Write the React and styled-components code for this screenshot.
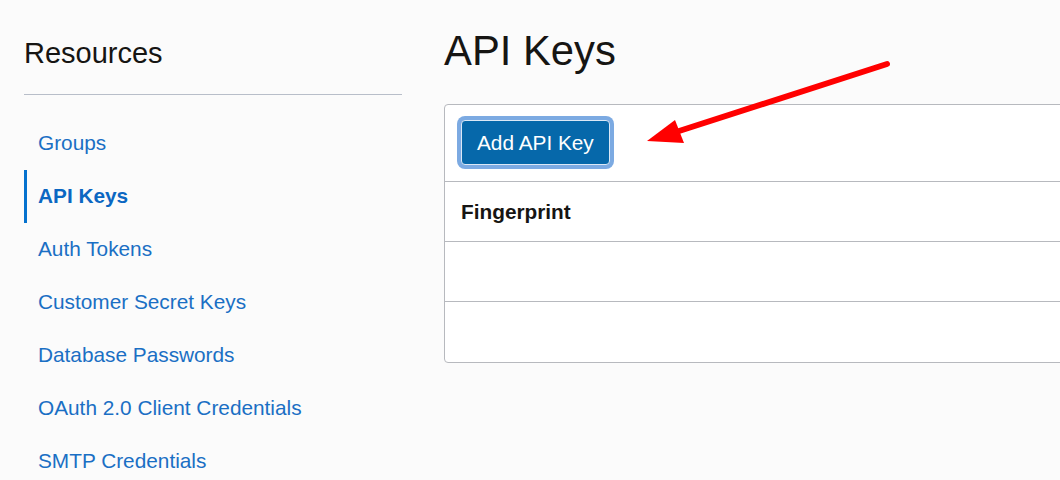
import React from "react";
import styled, { createGlobalStyle } from "styled-components";

const GlobalStyle = createGlobalStyle`
  html, body {
    margin: 0;
    padding: 0;
    background: #fbfbfb;
    overflow: hidden;
    font-family: "Liberation Sans", Arial, sans-serif;
  }
  * { box-sizing: border-box; }
`;

const Page = styled.div`
  position: relative;
  display: flex;
  width: 1060px;
  height: 480px;
  overflow: hidden;
`;

const Sidebar = styled.aside`
  flex: 0 0 378px;
  margin-left: 24px;
  padding-top: 37px;
`;

const SideTitle = styled.h2`
  margin: 0;
  font-size: 29px;
  line-height: 1.13;
  font-weight: 400;
  color: #161513;
`;

const Divider = styled.hr`
  margin: 24px 0 22px;
  border: 0;
  border-top: 1px solid #b8bec9;
  height: 0;
`;

const Nav = styled.nav`
  display: flex;
  flex-direction: column;
`;

const NavItem = styled.a`
  display: flex;
  align-items: center;
  height: 53px;
  padding-left: 11px;
  border-left: 3px solid ${(p) => (p.$active ? "#0572ce" : "transparent")};
  font-size: 20.8px;
  font-weight: ${(p) => (p.$active ? 700 : 400)};
  color: ${(p) => (p.$active ? "#0b67c2" : "#1a6fc4")};
  text-decoration: none;
  cursor: pointer;
`;

const Main = styled.main`
  flex: 0 0 auto;
  margin-left: 42px;
  padding-top: 27px;
`;

const Title = styled.h1`
  margin: 0;
  font-size: 41.8px;
  line-height: 1.15;
  font-weight: 400;
  color: #161513;
`;

const Panel = styled.section`
  margin-top: 29px;
  width: 660px;
  background: #ffffff;
  border: 1px solid #b7b9be;
  border-radius: 4px;
`;

const Toolbar = styled.div`
  display: flex;
  align-items: center;
  padding: 15px 16px 16px;
`;

const PrimaryButton = styled.button`
  height: 45px;
  padding: 0 15px;
  border: 1px solid #dbe8f6;
  border-radius: 4px;
  background: #0668aa;
  color: #ffffff;
  font-family: inherit;
  font-size: 20.8px;
  font-weight: 400;
  box-shadow: 0 0 0 4px #7caae2;
  cursor: pointer;
`;

const Row = styled.div`
  display: flex;
  align-items: center;
  height: ${(p) => (p.$last ? "61px" : "60px")};
  padding: 0 16px;
  border-top: 1px solid #b7b9be;
  font-size: 20.8px;
  font-weight: ${(p) => (p.$header ? 700 : 400)};
  color: #161513;
`;

const Overlay = styled.svg`
  position: absolute;
  left: 0;
  top: 0;
  pointer-events: none;
`;

const navItems = [
  "Groups",
  "API Keys",
  "Auth Tokens",
  "Customer Secret Keys",
  "Database Passwords",
  "OAuth 2.0 Client Credentials",
  "SMTP Credentials",
];

export default function App() {
  return (
    <>
      <GlobalStyle />
      <Page>
        <Sidebar>
          <SideTitle>Resources</SideTitle>
          <Divider />
          <Nav>
            {navItems.map((item) => (
              <NavItem key={item} $active={item === "API Keys"}>
                {item}
              </NavItem>
            ))}
          </Nav>
        </Sidebar>
        <Main>
          <Title>API Keys</Title>
          <Panel>
            <Toolbar>
              <PrimaryButton>Add API Key</PrimaryButton>
            </Toolbar>
            <Row $header>Fingerprint</Row>
            <Row />
            <Row $last />
          </Panel>
        </Main>
        <Overlay width="1060" height="480" viewBox="0 0 1060 480">
          <line
            x1="887"
            y1="64"
            x2="676"
            y2="132"
            stroke="#ff0000"
            strokeWidth="6"
            strokeLinecap="round"
          />
          <polygon points="647,141 675,120 684,143" fill="#ff0000" />
        </Overlay>
      </Page>
    </>
  );
}
